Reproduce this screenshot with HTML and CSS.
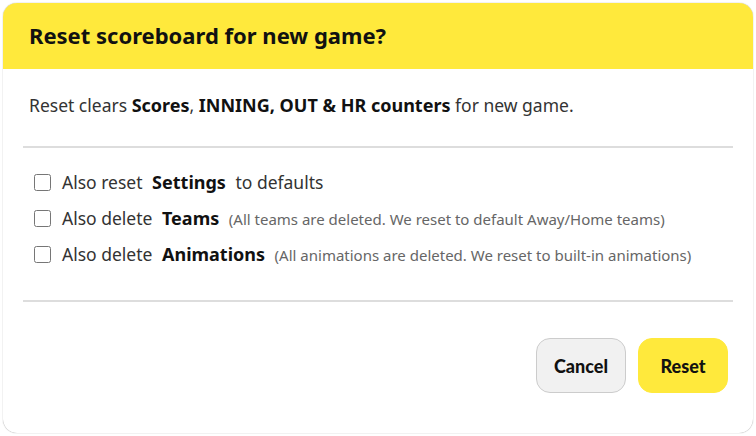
FILE: index.html
```html
<!DOCTYPE html>
<html lang="en">
<head>
<meta charset="UTF-8">
<meta name="viewport" content="width=device-width, initial-scale=1.0">
<title>Reset scoreboard</title>
<link rel="stylesheet" href="styles.css">
</head>
<body>

<div class="dialog">
  <div class="dialog-head">
    <h2>Reset scoreboard for new game?</h2>
  </div>

  <div class="dialog-body">
    <p class="lead">Reset clears <b>Scores</b>, <b>INNING, OUT &amp; HR counters</b> for new game.</p>

    <hr>

    <div class="options">
      <label class="option">
        <input type="checkbox">
        <span>Also reset <strong>Settings</strong> to defaults</span>
      </label>
      <label class="option">
        <input type="checkbox">
        <span>Also delete <strong>Teams</strong> <small>(All teams are deleted. We reset to default Away/Home teams)</small></span>
      </label>
      <label class="option">
        <input type="checkbox">
        <span>Also delete <strong>Animations</strong> <small>(All animations are deleted. We reset to built-in animations)</small></span>
      </label>
    </div>

    <hr>
  </div>

  <div class="dialog-foot">
    <button class="btn btn-cancel">Cancel</button>
    <button class="btn btn-reset">Reset</button>
  </div>
</div>

</body>
</html>
```

FILE: styles.css
```css
body {
  margin: 0;
  background: #fff;
  font-family: "Noto Sans", "Open Sans", sans-serif;
  color: #222;
}
.dialog {
  margin: 3px;
  height: 430px;
  border-radius: 14px;
  overflow: hidden;
  background: #fff;
  box-shadow: 0 0 1px rgba(0,0,0,0.5);
  display: flex;
  flex-direction: column;
}
.dialog-head {
  background: #ffe93c;
  height: 66px;
  padding: 0 26px;
  display: flex;
  align-items: center;
}
.dialog-head h2 {
  margin: 0 0 2px;
  font-size: 22px;
  font-weight: 700;
  color: #111;
}
.dialog-body { padding: 0 20px; }
.lead {
  margin: 24px 6px 29px;
  font-size: 17.5px;
  color: #333;
}
.lead b { color: #111; font-size: 18px; }
hr {
  border: 0;
  border-top: 2px solid #ddd;
  margin: 0;
}
.options {
  padding: 22px 0 34px 11px;
  display: flex;
  flex-direction: column;
  gap: 12px;
}
.option {
  display: flex;
  align-items: center;
  gap: 11px;
  font-size: 17.5px;
  color: #333;
  height: 24px;
}
.option input {
  margin: 0;
  width: 17px;
  height: 17px;
}
.option strong { color: #111; font-size: 18px; margin: 0 5px; }
.option small { font-size: 15px; color: #666; }
.dialog-foot {
  display: flex;
  justify-content: flex-end;
  gap: 12px;
  padding: 36px 25px 0;
}
.btn {
  width: 90px;
  height: 55px;
  border-radius: 14px;
  font-family: Lato, sans-serif;
  font-weight: 900;
  font-size: 18px;
  color: #111;
  cursor: pointer;
}
.btn-cancel { background: #f1f1f1; border: 1px solid #ccc; }
.btn-reset { background: #ffe93c; border: 1px solid #ffe93c; }
```
